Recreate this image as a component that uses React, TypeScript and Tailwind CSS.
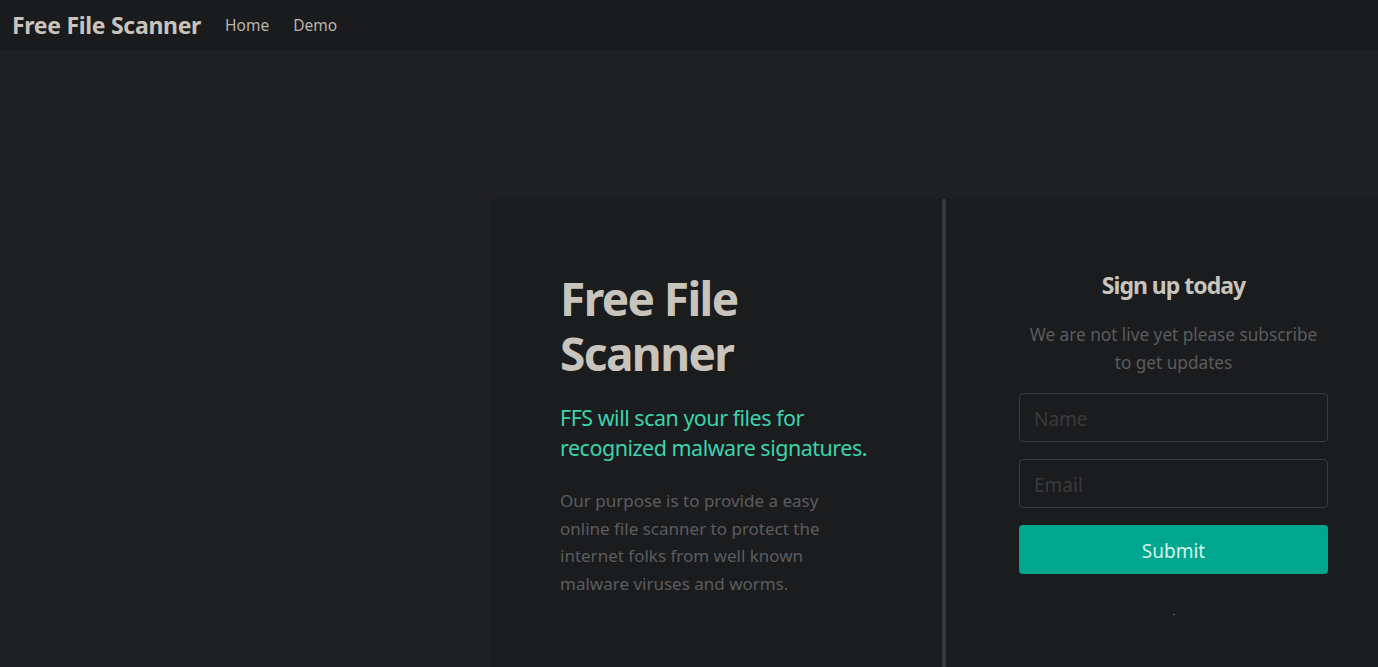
import React from "react";

export default function App() {
  const font = { fontFamily: '"Noto Sans", "Open Sans", sans-serif' };
  return (
    <div className="min-h-[667px] h-[667px] overflow-hidden bg-[#1f2023]" style={font}>
      <nav className="h-[50px] bg-[#1a1b1d] flex items-center px-3 gap-6">
        <span className="text-[23px] font-bold text-[#c8c4bc] tracking-[-0.3px]">Free File Scanner</span>
        <a className="pt-[1px] text-[15.5px] text-[#b8b4ac]">Home</a>
        <a className="pt-[1px] text-[15.5px] text-[#b8b4ac]">Demo</a>
      </nav>
      <div className="flex pt-[149px]">
        <div className="ml-[489px] w-[912px] shrink-0 h-[520px] bg-[#1b1c1e] rounded-tl-[8px] flex">
          <div className="w-[453px] shrink-0 pl-[71px] pr-[40px] pt-[72px]">
            <h1 className="text-[46px] leading-[55px] font-bold text-[#c8c4bc] tracking-[-1.6px]">
              Free File
              <br />
              Scanner
            </h1>
            <p className="mt-[22px] text-[21.5px] leading-[30px] text-[#3cd3ad] tracking-[-0.5px]">
              FFS will scan your files for recognized malware signatures.
            </p>
            <p className="mt-[24px] w-[285px] text-[17px] leading-[27.5px] text-[#5b5c5e]">
              Our purpose is to provide a easy online file scanner to protect the internet folks from well known malware viruses and worms.
            </p>
          </div>
          <div className="w-[4px] bg-[#38393b] shrink-0" />
          <div className="w-[455px] shrink-0 flex flex-col items-center pt-[70px]">
            <h2 className="text-[23px] leading-[32px] font-bold text-[#c8c4bc] tracking-[-1px]">Sign up today</h2>
            <p className="mt-[20px] w-[300px] text-center text-[17.2px] leading-[28px] text-[#5b5c5e]">
              We are not live yet please subscribe to get updates
            </p>
            <div className="mt-[16px] w-[309px] flex flex-col gap-[17px]">
              <input
                placeholder="Name"
                className="h-[49px] w-full rounded-[4px] border border-[#3a3b3d] bg-transparent px-[14px] pt-[2px] text-[19px] text-[#c8c4bc] placeholder:text-[#3a3b3d] outline-none"
                style={font}
              />
              <input
                placeholder="Email"
                className="h-[49px] w-full rounded-[4px] border border-[#3a3b3d] bg-transparent px-[14px] pt-[2px] text-[19px] text-[#c8c4bc] placeholder:text-[#3a3b3d] outline-none"
                style={font}
              />
              <button
                className="h-[49px] w-full rounded-[4px] bg-[#00a78e] pt-[4px] text-[19px] text-[#d9f2ec]"
                style={font}
              >
                Submit
              </button>
            </div>
            <div className="mt-[40px] w-[2px] h-[1px] bg-[#5b5c5e]" />
          </div>
        </div>
      </div>
    </div>
  );
}
